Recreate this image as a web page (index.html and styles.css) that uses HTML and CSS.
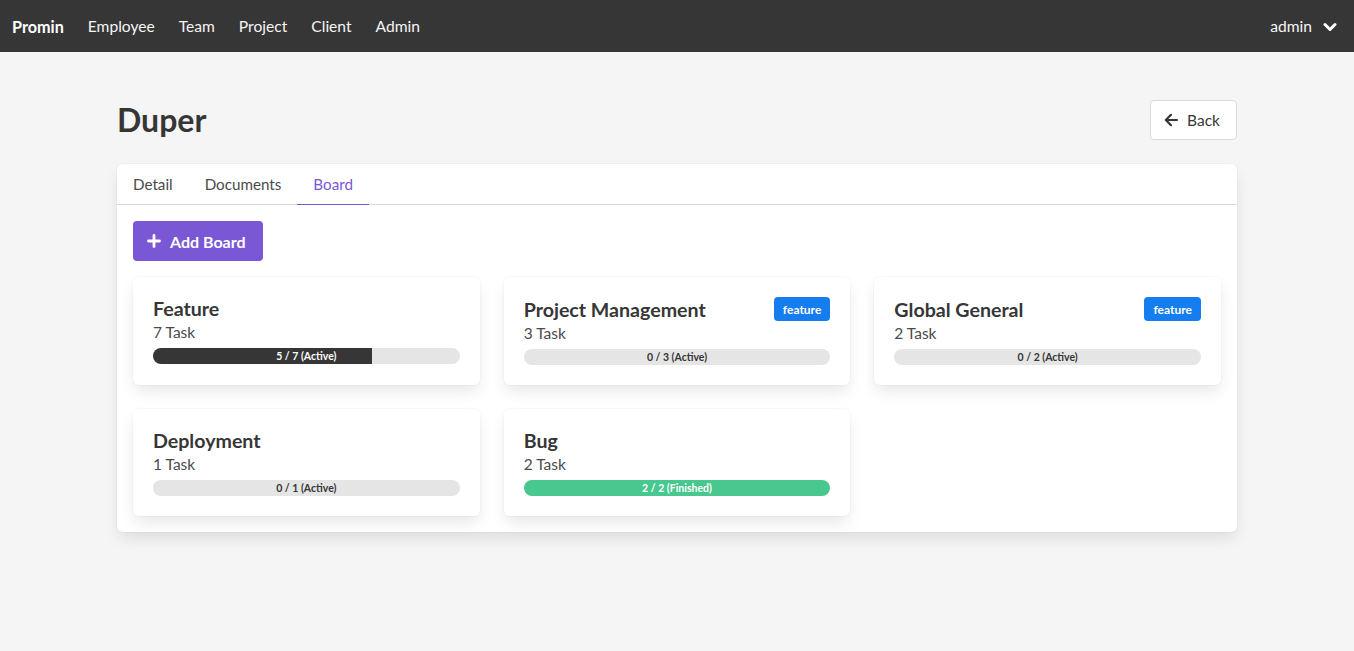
FILE: index.html
```html
<!DOCTYPE html>
<html lang="en">
<head>
<meta charset="utf-8">
<title>Duper - Promin</title>
<link rel="stylesheet" href="styles.css">
</head>
<body>
<nav class="navbar">
  <div class="nav-start">
    <a class="nav-brand">Promin</a>
    <a class="nav-item">Employee</a>
    <a class="nav-item">Team</a>
    <a class="nav-item">Project</a>
    <a class="nav-item">Client</a>
    <a class="nav-item">Admin</a>
  </div>
  <div class="nav-end">
    <a class="nav-user">admin
      <svg class="chev" width="14" height="14" viewBox="0 0 14 14"><polyline points="2,4.5 7,9.5 12,4.5" fill="none" stroke="#fff" stroke-width="3" stroke-linecap="round" stroke-linejoin="round"/></svg>
    </a>
  </div>
</nav>

<main class="section">
  <div class="container">
    <div class="head">
      <h1 class="title">Duper</h1>
      <button class="btn-back">
        <svg width="16" height="16" viewBox="0 0 16 16"><path d="M14 8H3M8 2.8L2.8 8L8 13.2" fill="none" stroke="#363636" stroke-width="2.2" stroke-linecap="round" stroke-linejoin="round"/></svg>
        <span>Back</span>
      </button>
    </div>

    <div class="card">
      <ul class="tabs">
        <li class="tab">Detail</li>
        <li class="tab">Documents</li>
        <li class="tab active">Board</li>
      </ul>
      <div class="card-body">
        <button class="btn-add">
          <svg width="14" height="14" viewBox="0 0 14 14"><path d="M7 1.5V12.5M1.5 7H12.5" stroke="#fff" stroke-width="2.8" stroke-linecap="round"/></svg>
          <span>Add Board</span>
        </button>

        <div class="boards">
          <div class="board">
            <div class="board-head"><h2 class="board-title">Feature</h2></div>
            <div class="board-count">7 Task</div>
            <div class="bar"><div class="fill dark" style="width:71.43%"></div><span class="bar-label light">5 / 7 (Active)</span></div>
          </div>
          <div class="board">
            <div class="board-head tagged"><h2 class="board-title">Project Management</h2><span class="tag">feature</span></div>
            <div class="board-count">3 Task</div>
            <div class="bar"><span class="bar-label">0 / 3 (Active)</span></div>
          </div>
          <div class="board">
            <div class="board-head tagged"><h2 class="board-title">Global General</h2><span class="tag">feature</span></div>
            <div class="board-count">2 Task</div>
            <div class="bar"><span class="bar-label">0 / 2 (Active)</span></div>
          </div>
          <div class="board">
            <div class="board-head"><h2 class="board-title">Deployment</h2></div>
            <div class="board-count">1 Task</div>
            <div class="bar"><span class="bar-label">0 / 1 (Active)</span></div>
          </div>
          <div class="board">
            <div class="board-head"><h2 class="board-title">Bug</h2></div>
            <div class="board-count">2 Task</div>
            <div class="bar"><div class="fill green" style="width:100%"></div><span class="bar-label light">2 / 2 (Finished)</span></div>
          </div>
        </div>
      </div>
    </div>
  </div>
</main>
</body>
</html>
```

FILE: styles.css
```css
* { box-sizing: border-box; }
html, body { margin: 0; padding: 0; }
body {
  background: #f5f5f5;
  font-family: "Lato", "Liberation Sans", sans-serif;
  font-size: 15.5px;
  color: #4a4a4a;
}
a { text-decoration: none; color: inherit; }

.navbar {
  height: 52px;
  background: #363636;
  display: flex;
  justify-content: space-between;
  align-items: stretch;
}
.nav-start, .nav-end { display: flex; align-items: stretch; }
.nav-brand, .nav-item, .nav-user {
  display: flex;
  align-items: center;
  padding: 0 12px;
  color: #f5f5f5;
  font-size: 15.6px;
}
.nav-brand { font-weight: 700; color: #fff; font-size: 16.2px; }
.nav-user { padding: 0 17px 0 12px; gap: 11px; }
.chev { display: block; margin-top: 1px; }

.section { padding: 48px 0; }
.container { width: 1120px; margin: 0 auto; }

.head {
  display: flex;
  justify-content: space-between;
  align-items: center;
  margin-bottom: 24px;
}
.title {
  margin: 0;
  font-size: 32px;
  line-height: 40px;
  font-weight: 700;
  color: #363636;
}
.btn-back {
  height: 40px;
  display: flex;
  align-items: center;
  gap: 8px;
  padding: 0 16px 0 12px;
  background: #fff;
  border: 1px solid #dbdbdb;
  border-radius: 4px;
  font-family: inherit;
  font-size: 15.5px;
  color: #363636;
}
.btn-back svg { display: block; }

.card {
  background: #fff;
  border-radius: 6px;
  box-shadow: 0 8px 16px -2px rgba(10,10,10,.1), 0 0 0 1px rgba(10,10,10,.02);
}
.tabs {
  list-style: none;
  margin: 0;
  padding: 0;
  display: flex;
  border-bottom: 1px solid #dbdbdb;
}
.tab {
  padding: 8px 16px;
  line-height: 24px;
  font-size: 15.2px;
  color: #4a4a4a;
  border-bottom: 1px solid #dbdbdb;
  margin-bottom: -1px;
}
.tab.active { color: #7957d5; border-bottom-color: #7957d5; }

.card-body { padding: 16px; }
.btn-add {
  height: 40px;
  display: flex;
  align-items: center;
  gap: 9px;
  padding: 0 17px 0 14px;
  background: #7957d5;
  color: #fff;
  border: none;
  border-radius: 4px;
  font-family: inherit;
  font-size: 16px;
  font-weight: 700;
}
.btn-add svg { display: block; }

.boards {
  margin-top: 16px;
  display: grid;
  grid-template-columns: repeat(3, 1fr);
  column-gap: 24px;
  row-gap: 24px;
}
.board {
  background: #fff;
  border-radius: 6px;
  padding: 20px;
  box-shadow: 0 8px 16px -2px rgba(10,10,10,.1), 0 0 0 1px rgba(10,10,10,.02);
}
.board-head {
  display: flex;
  justify-content: space-between;
  align-items: center;
  min-height: 23px;
}
.board-title {
  margin: 0;
  font-size: 19.6px;
  line-height: 23px;
  font-weight: 700;
  color: #363636;
}
.tag {
  height: 24px;
  display: flex;
  align-items: center;
  padding: 0 9px;
  background: #167df0;
  color: #fff;
  border-radius: 4px;
  font-size: 12px;
  font-weight: 700;
}
.board-count {
  line-height: 24px;
  color: #4a4a4a;
  margin-bottom: 4px;
}
.bar {
  position: relative;
  height: 16px;
  border-radius: 8px;
  background: #e5e5e5;
  overflow: hidden;
  display: flex;
}
.fill { height: 100%; }
.fill.dark { background: #363636; }
.fill.green { background: #48c78e; }
.bar-label {
  position: absolute;
  inset: 0;
  display: flex;
  align-items: center;
  justify-content: center;
  font-size: 10.5px;
  font-weight: 700;
  color: #363636;
}
.bar-label.light { color: #fff; }
```
